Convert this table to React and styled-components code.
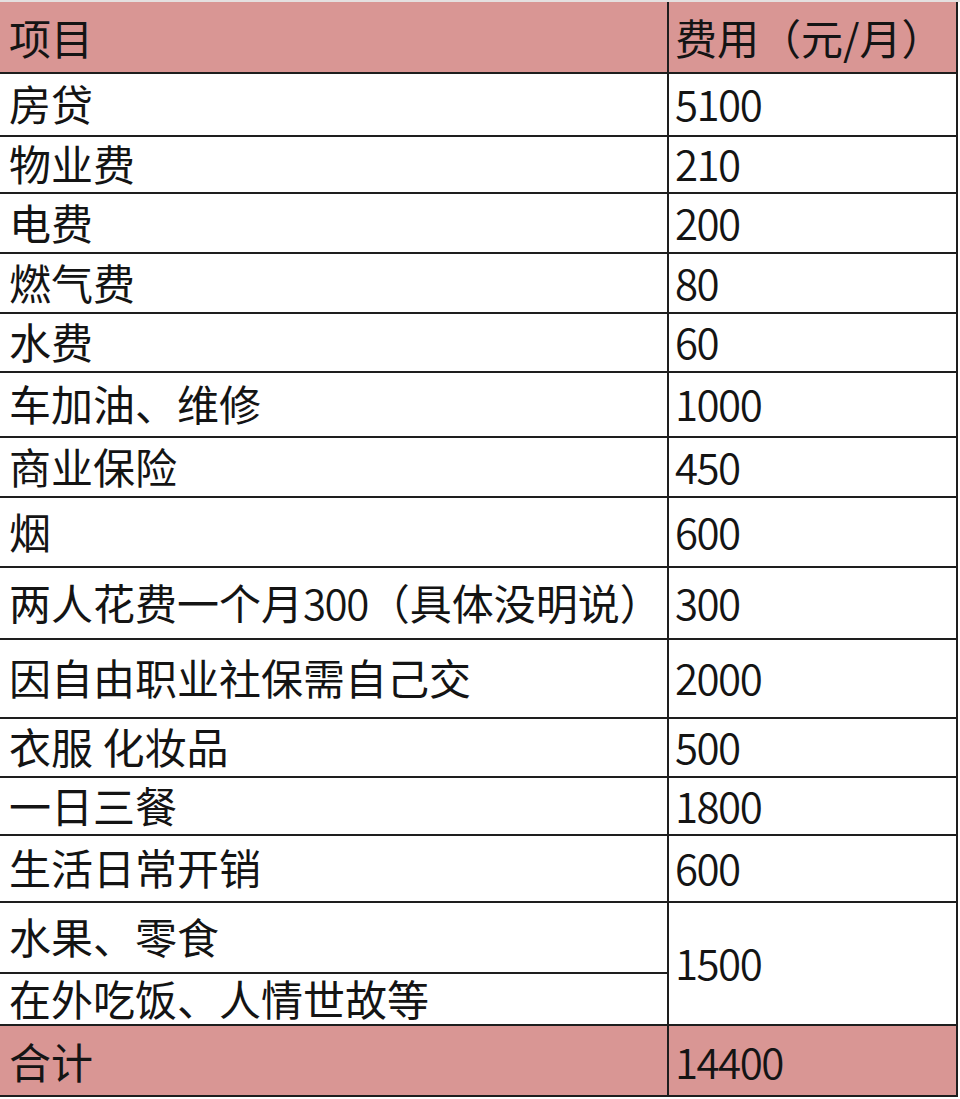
import React from "react";
import styled, { createGlobalStyle } from "styled-components";

const Global = createGlobalStyle`
  html, body { margin: 0; padding: 0; background: #ffffff; }
  body { font-family: "Noto Sans CJK SC", "Noto Sans", sans-serif; }
`;

const Page = styled.div`
  width: 960px;
  height: 1099px;
  padding-top: 2px;
  box-sizing: border-box;
  background: #fff;
  position: relative;
  &::before {
    content: "";
    position: absolute;
    top: 0; left: 0; right: 0;
    height: 2px;
    background: #e4e0e0;
  }
`;

const Table = styled.div`
  display: grid;
  width: 958px;
  grid-template-columns: 669px 289px;
  grid-template-rows: ${(p) => p.$rows.map((r) => `${r}px`).join(" ")};
`;

const Cell = styled.div`
  display: flex;
  align-items: center;
  box-sizing: border-box;
  border-bottom: 2px solid #1e1e1e;
  border-right: 2px solid #1e1e1e;
  background: ${(p) => (p.$head ? "#d99694" : "#ffffff")};
  color: #141414;
  font-size: 42px;
  line-height: 1;
  white-space: nowrap;
  padding-left: ${(p) => (p.$num ? "6px" : "9px")};
  padding-bottom: ${(p) => (p.$head ? "0px" : "3px")};
  grid-row: ${(p) => (p.$span ? `span ${p.$span}` : "auto")};
`;

const Num = styled.span`
  letter-spacing: -1.5px;
  font-weight: 350;
`;

const rows = [
  ["房贷", "5100"],
  ["物业费", "210"],
  ["电费", "200"],
  ["燃气费", "80"],
  ["水费", "60"],
  ["车加油、维修", "1000"],
  ["商业保险", "450"],
  ["烟", "600"],
  [<>两人花费一个月<Num>300</Num>（具体没明说）</>, "300"],
  ["因自由职业社保需自己交", "2000"],
  ["衣服 化妆品", "500"],
  ["一日三餐", "1800"],
  ["生活日常开销", "600"],
];

const heights = [72, 63, 57, 60, 60, 59, 65, 60, 70, 72, 79, 59, 58, 67, 71, 52, 71];

export default function App() {
  return (
    <>
      <Global />
      <Page>
        <Table $rows={heights}>
          <Cell $head>项目</Cell>
          <Cell $head $num>费用（元/月）</Cell>
          {rows.map(([name, cost], i) => (
            <React.Fragment key={i}>
              <Cell>{name}</Cell>
              <Cell $num><Num>{cost}</Num></Cell>
            </React.Fragment>
          ))}
          <Cell>水果、零食</Cell>
          <Cell $num $span={2}><Num>1500</Num></Cell>
          <Cell>在外吃饭、人情世故等</Cell>
          <Cell $head>合计</Cell>
          <Cell $head $num><Num>14400</Num></Cell>
        </Table>
      </Page>
    </>
  );
}
